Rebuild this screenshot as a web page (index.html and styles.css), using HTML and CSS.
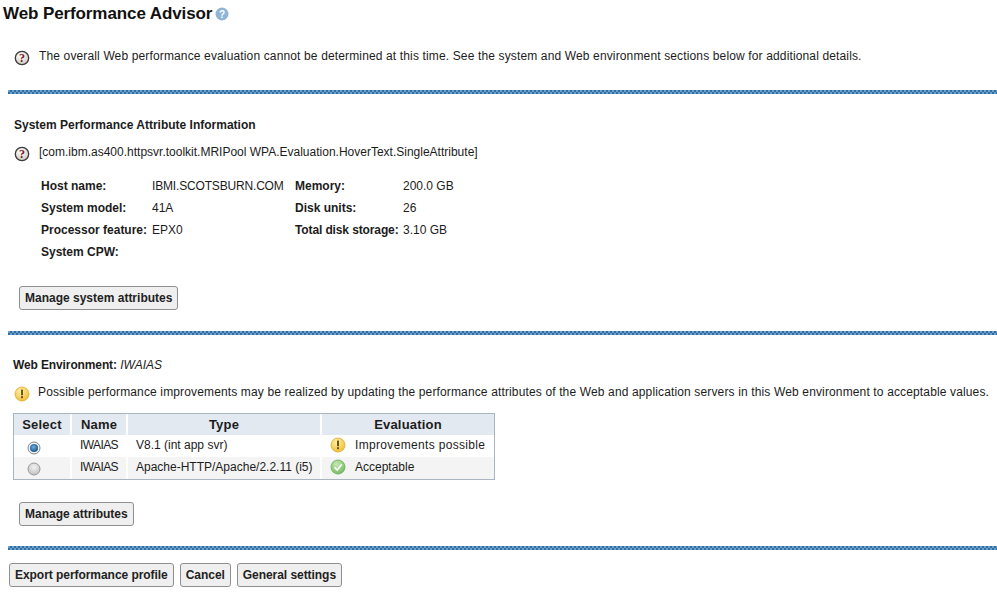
FILE: index.html
```html
<!DOCTYPE html>
<html lang="en">
<head>
  <meta charset="UTF-8">
  <title>Web Performance Advisor</title>
  <link rel="stylesheet" href="styles.css">
</head>
<body>
  <svg class="defs" width="0" height="0">
    <defs>
      <radialGradient id="greyFill" cx="0.4" cy="0.3" r="0.8">
        <stop offset="0" stop-color="#ffffff"/>
        <stop offset="1" stop-color="#c9c6c0"/>
      </radialGradient>
      <radialGradient id="yellowFill" cx="0.4" cy="0.3" r="0.8">
        <stop offset="0" stop-color="#fff0a0"/>
        <stop offset="1" stop-color="#eeb933"/>
      </radialGradient>
      <radialGradient id="greenFill" cx="0.4" cy="0.3" r="0.8">
        <stop offset="0" stop-color="#c5e8b0"/>
        <stop offset="1" stop-color="#6cb85c"/>
      </radialGradient>
      <radialGradient id="radioOn" cx="0.45" cy="0.4" r="0.7">
        <stop offset="0" stop-color="#6fb0e6"/>
        <stop offset="1" stop-color="#0b4574"/>
      </radialGradient>
      <radialGradient id="radioOff" cx="0.5" cy="0.35" r="0.7">
        <stop offset="0" stop-color="#f2f2f2"/>
        <stop offset="1" stop-color="#bdbdbd"/>
      </radialGradient>
    </defs>
  </svg>

  <h1 class="page-title">Web Performance Advisor
    <svg class="help-icon" width="14" height="14" viewBox="0 0 14 14">
      <circle cx="7" cy="7" r="6.5" fill="#8fb4d6"/>
      <text x="7" y="10.5" class="help-mark">?</text>
    </svg>
  </h1>

  <div class="message top-message">
    <svg class="icon" width="16" height="16" viewBox="0 0 16 16">
      <circle cx="8" cy="8" r="6.7" fill="url(#greyFill)" stroke="#3d3a38" stroke-width="1.3"/>
      <text x="8" y="12" class="question-mark">?</text>
    </svg>
    <span class="wide-text">The overall Web performance evaluation cannot be determined at this time. See the system and Web environment sections below for additional details.</span>
  </div>

  <div class="divider"></div>

  <section class="system">
    <h2 class="section-title">System Performance Attribute Information</h2>
    <div class="message">
      <svg class="icon" width="16" height="16" viewBox="0 0 16 16">
        <circle cx="8" cy="8" r="6.7" fill="url(#greyFill)" stroke="#3d3a38" stroke-width="1.3"/>
        <text x="8" y="12" class="question-mark">?</text>
      </svg>
      <span>[com.ibm.as400.httpsvr.toolkit.MRIPool WPA.Evaluation.HoverText.SingleAttribute]</span>
    </div>

    <div class="attributes">
      <b>Host name:</b><span class="host">IBMI.SCOTSBURN.COM</span><b>Memory:</b><span>200.0 GB</span>
      <b>System model:</b><span>41A</span><b>Disk units:</b><span>26</span>
      <b>Processor feature:</b><span>EPX0</span><b class="narrow">Total disk storage:</b><span>3.10 GB</span>
      <b>System CPW:</b><span></span><span></span><span></span>
    </div>

    <button class="btn system-btn">Manage system attributes</button>
  </section>

  <div class="divider"></div>

  <section class="environment">
    <h2 class="section-title"><span class="narrow">Web Environment:</span> <i>IWAIAS</i></h2>
    <div class="message">
      <svg class="icon" width="16" height="16" viewBox="0 0 16 16">
        <circle cx="8" cy="8" r="7" fill="url(#yellowFill)" stroke="#e0a92a" stroke-width="0.8"/>
        <rect x="7" y="3.6" width="2" height="5.6" fill="#6e5410"/>
        <rect x="7" y="10.2" width="2" height="2" fill="#6e5410"/>
      </svg>
      <span class="wide-text">Possible performance improvements may be realized by updating the performance attributes of the Web and application servers in this Web environment to acceptable values.</span>
    </div>

    <table class="servers">
      <thead>
        <tr>
          <th class="col-select">Select</th>
          <th class="col-name">Name</th>
          <th class="col-type">Type</th>
          <th class="col-eval">Evaluation</th>
        </tr>
      </thead>
      <tbody>
        <tr>
          <td class="radio-cell">
            <svg width="14" height="14" viewBox="0 0 14 14">
              <circle cx="7" cy="7" r="6" fill="#eef0f2" stroke="#7f858b"/>
              <circle cx="7" cy="7" r="4" fill="url(#radioOn)"/>
            </svg>
          </td>
          <td class="server-name">IWAIAS</td>
          <td>V8.1 (int app svr)</td>
          <td>
            <div class="status">
              <svg width="16" height="16" viewBox="0 0 16 16">
                <circle cx="8" cy="8" r="7" fill="url(#yellowFill)" stroke="#e0a92a" stroke-width="0.8"/>
                <rect x="7" y="3.6" width="2" height="5.6" fill="#6e5410"/>
                <rect x="7" y="10.2" width="2" height="2" fill="#6e5410"/>
              </svg>
              <span class="status-wide">Improvements possible</span>
            </div>
          </td>
        </tr>
        <tr class="alt">
          <td class="radio-cell">
            <svg width="14" height="14" viewBox="0 0 14 14">
              <circle cx="7" cy="7" r="6" fill="url(#radioOff)" stroke="#999"/>
            </svg>
          </td>
          <td class="server-name">IWAIAS</td>
          <td>Apache-HTTP/Apache/2.2.11 (i5)</td>
          <td>
            <div class="status">
              <svg width="16" height="16" viewBox="0 0 16 16">
                <circle cx="8" cy="8" r="7" fill="url(#greenFill)" stroke="#6aa85c" stroke-width="0.8"/>
                <path d="M4.5 8.2 7.2 11 11.8 5.2" fill="none" stroke="#fff" stroke-width="1.6"/>
              </svg>
              <span>Acceptable</span>
            </div>
          </td>
        </tr>
      </tbody>
    </table>

    <button class="btn attrs-btn">Manage attributes</button>
  </section>

  <div class="divider"></div>

  <div class="actions">
    <button class="btn">Export performance profile</button>
    <button class="btn">Cancel</button>
    <button class="btn">General settings</button>
  </div>
</body>
</html>
```

FILE: styles.css
```css
body {
  margin: 0;
  font-family: "Liberation Sans", Arial, sans-serif;
  font-size: 12px;
  color: #1c1c1c;
  background: #fff;
  overflow: hidden;
}

.defs {
  position: absolute;
}

.page-title {
  margin: 0;
  padding: 3px 0 0 3px;
  height: 21px;
  font-size: 17px;
  line-height: 20px;
  letter-spacing: -0.1px;
  color: #111;
  display: flex;
  align-items: center;
  gap: 3px;
}

.help-icon {
  flex: none;
}

.help-mark {
  font: bold 10px "Liberation Sans", sans-serif;
  fill: #fff;
  text-anchor: middle;
}

.question-mark {
  font: bold 12px "Liberation Serif", serif;
  fill: #7a1414;
  text-anchor: middle;
}

.message {
  display: flex;
  align-items: flex-start;
  height: 16px;
  line-height: 14px;
  padding-left: 14px;
}

.message .icon {
  flex: none;
  margin-right: 9px;
  margin-top: 1px;
}

.wide-text {
  letter-spacing: 0.14px;
}

.top-message {
  margin-top: 25px;
}

.divider {
  height: 4px;
  margin-left: 8px;
  background: repeating-conic-gradient(#2f6ea5 0 25%, #6f9fc9 0 50%) 0 0 / 4px 4px;
}

.top-message + .divider {
  margin-top: 25px;
}

.system {
  padding: 24px 0 21px;
}

.section-title {
  margin: 0;
  padding-left: 14px;
  font-size: 12px;
  line-height: 14px;
  font-weight: bold;
}

.section-title i {
  font-weight: normal;
}

.system .message {
  margin-top: 13px;
}

.attributes {
  display: grid;
  grid-template-columns: 111px 143px 108px auto;
  grid-auto-rows: 22px;
  line-height: 22px;
  margin: 14px 0 0 41px;
}

.host {
  letter-spacing: -0.17px;
}

.narrow {
  letter-spacing: -0.12px;
}

.btn {
  display: block;
  font: bold 12px "Liberation Sans", Arial, sans-serif;
  letter-spacing: -0.05px;
  color: #222;
  height: 24px;
  padding: 0 5px;
  background: #efefef;
  border: 1px solid #8f8f8f;
  border-radius: 3px;
}

.system-btn {
  margin: 23px 0 0 19px;
  letter-spacing: 0;
}

.environment {
  padding: 23px 0 20px;
}

.environment .section-title {
  padding-left: 13px;
}

.environment .message {
  margin-top: 13px;
}

.environment .message .icon {
  margin-right: 8px;
}

.servers {
  margin: 12px 0 0 13px;
  width: 482px;
  border: 1px solid #a9b6c2;
  border-collapse: separate;
  border-spacing: 0;
  table-layout: fixed;
}

.servers th {
  height: 21px;
  padding: 0;
  background: #e3e9f0;
  font-size: 13px;
  letter-spacing: 0.2px;
  border-right: 2px solid #fff;
}

.servers th:last-child {
  border-right: 0;
}

.col-select { width: 56px; }
.col-name { width: 54px; }
.col-type { width: 192px; }

.servers td {
  height: 22px;
  padding: 0 0 2px 8px;
  box-sizing: border-box;
  line-height: 20px;
  border-right: 2px solid #fff;
}

.servers td:last-child {
  border-right: 0;
}

.servers .alt td {
  background: #f4f4f4;
}

.servers .radio-cell {
  padding: 0 0 0 13px;
}

.radio-cell svg {
  display: block;
  margin-top: 3px;
}

.alt .radio-cell svg {
  margin-top: 2px;
}

.server-name {
  letter-spacing: -0.6px;
}

.status {
  display: flex;
  align-items: center;
  gap: 9px;
}

.status-wide {
  letter-spacing: 0.33px;
}

.attrs-btn {
  margin: 22px 0 0 19px;
  letter-spacing: 0;
}

.actions {
  display: flex;
  gap: 6px;
  padding: 13px 0 0 9px;
}
```
